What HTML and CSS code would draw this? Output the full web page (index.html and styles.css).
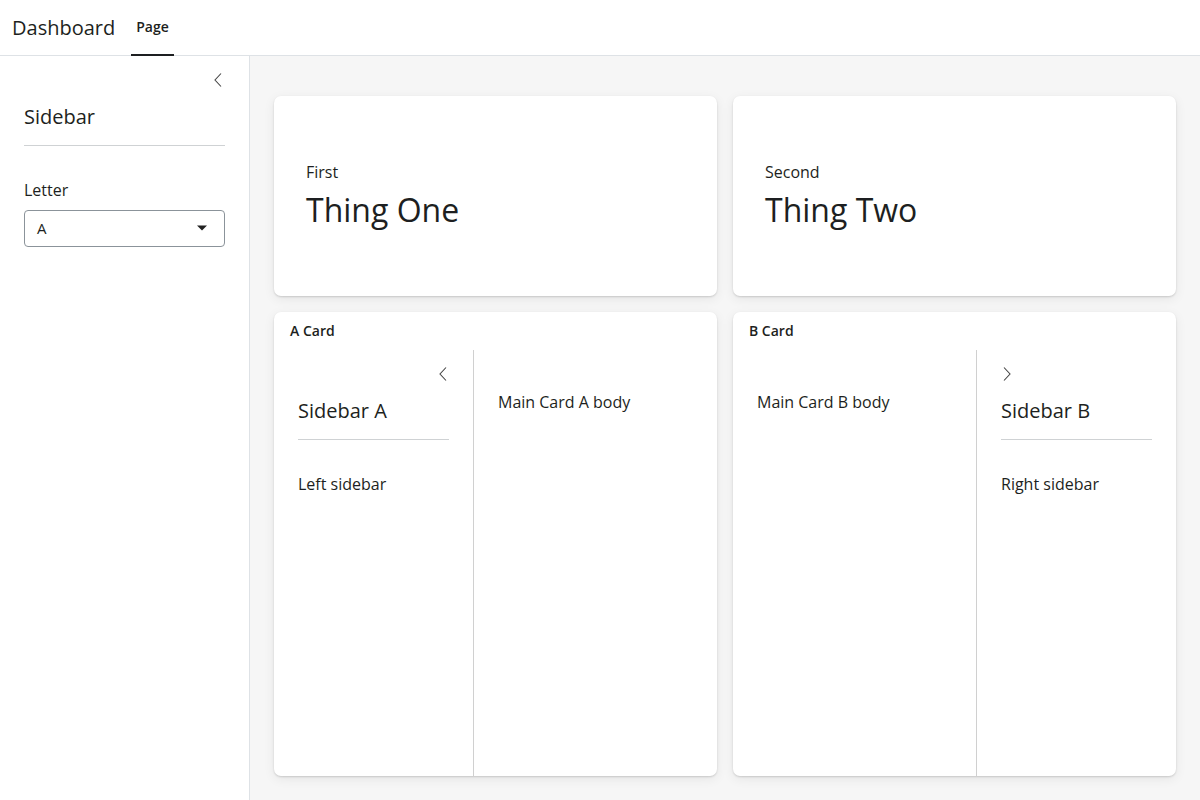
FILE: index.html
```html
<!DOCTYPE html>
<html>
<head>
<meta charset="utf-8">
<link rel="stylesheet" href="styles.css">
</head>
<body>
<header class="navbar">
  <div class="brand">Dashboard</div>
  <nav class="tabs"><a class="tab active">Page</a></nav>
</header>
<div class="layout">
  <aside class="sidebar">
    <div class="collapse-row">
      <svg class="chev" width="12" height="16" viewBox="0 0 12 16"><path d="M9 1.5 L3 8 L9 14.5" fill="none" stroke="#444" stroke-width="1.1"/></svg>
    </div>
    <h2 class="side-title">Sidebar</h2>
    <hr class="rule">
    <label class="field-label">Letter</label>
    <div class="select">
      <span>A</span>
      <svg width="12" height="8" viewBox="0 0 12 8"><path d="M1 1.5 H11 L6 6.5 Z" fill="#222"/></svg>
    </div>
  </aside>
  <main class="main">
    <div class="grid">
      <section class="card value-box">
        <div class="vb-title">First</div>
        <div class="vb-value">Thing One</div>
      </section>
      <section class="card value-box">
        <div class="vb-title">Second</div>
        <div class="vb-value">Thing Two</div>
      </section>
      <section class="card layout-card">
        <div class="card-header">A Card</div>
        <div class="card-body">
          <div class="inner-sidebar left">
            <div class="collapse-row">
              <svg class="chev" width="12" height="16" viewBox="0 0 12 16"><path d="M9 1.5 L3 8 L9 14.5" fill="none" stroke="#444" stroke-width="1.1"/></svg>
            </div>
            <h3 class="inner-title">Sidebar A</h3>
            <hr class="rule">
            <p class="inner-text">Left sidebar</p>
          </div>
          <div class="inner-main">Main Card A body</div>
        </div>
      </section>
      <section class="card layout-card">
        <div class="card-header">B Card</div>
        <div class="card-body">
          <div class="inner-main">Main Card B body</div>
          <div class="inner-sidebar right">
            <div class="collapse-row start">
              <svg class="chev" width="12" height="16" viewBox="0 0 12 16"><path d="M3 1.5 L9 8 L3 14.5" fill="none" stroke="#444" stroke-width="1.1"/></svg>
            </div>
            <h3 class="inner-title">Sidebar B</h3>
            <hr class="rule">
            <p class="inner-text">Right sidebar</p>
          </div>
        </div>
      </section>
    </div>
  </main>
</div>
</body>
</html>
```

FILE: styles.css
```css
* { box-sizing: border-box; }
html, body { margin: 0; height: 100%; }
body {
  font-family: "Open Sans", "Noto Sans", sans-serif;
  color: #1d1f21;
  background: #fff;
  overflow: hidden;
}
.navbar {
  height: 56px;
  border-bottom: 1px solid #dee2e6;
  display: flex;
  align-items: stretch;
  padding-left: 12px;
  background: #fff;
}
.brand {
  font-size: 20px;
  display: flex;
  align-items: center;
  margin-right: 16px;
}
.tabs { display: flex; }
.tab {
  font-size: 14px;
  font-weight: 600;
  padding: 0 5px;
  display: flex;
  align-items: center;
  border-bottom: 2px solid #1d1f21;
  margin-bottom: -1px;
  padding-bottom: 1px;
}
.layout {
  display: flex;
  height: calc(100% - 56px);
}
.sidebar {
  width: 250px;
  flex: none;
  border-right: 1px solid #dee2e6;
  padding: 16px 24px 0 24px;
  background: #fff;
}
.collapse-row {
  display: flex;
  justify-content: flex-end;
  height: 22px;
}
.sidebar .collapse-row { padding-right: 1px; }
.collapse-row.start { justify-content: flex-start; }
.side-title {
  font-size: 20px;
  font-weight: 400;
  margin: 9px 0 0 0;
  line-height: 28px;
}
.rule {
  border: 0;
  border-top: 1px solid #cfd2d4;
  margin: 14px 0 0 0;
}
.field-label {
  display: block;
  font-size: 16px;
  margin-top: 33px;
  line-height: 22px;
}
.select {
  margin-top: 9px;
  height: 37px;
  border: 1px solid #8b939a;
  border-radius: 4px;
  display: flex;
  align-items: center;
  justify-content: space-between;
  padding: 0 16px 1px 12px;
  font-size: 15px;
}
.main {
  flex: 1;
  background: #f6f6f6;
  padding: 40px 24px 24px 24px;
}
.grid {
  display: grid;
  grid-template-columns: 1fr 1fr;
  grid-template-rows: 200px 464px;
  gap: 16px;
}
.card {
  background: #fff;
  border-radius: 7px;
  box-shadow: 0 1px 2px rgba(0,0,0,0.15), 0 3px 12px rgba(0,0,0,0.07);
  overflow: hidden;
}
.value-box {
  display: flex;
  flex-direction: column;
  justify-content: center;
  padding: 0 32px;
}
.vb-title {
  font-size: 16px;
  line-height: 24px;
  margin-top: -3px;
}
.vb-value {
  font-size: 32px;
  line-height: 40px;
  margin-top: 6px;
}
.layout-card {
  display: flex;
  flex-direction: column;
}
.card-header {
  height: 38px;
  font-size: 14px;
  font-weight: 600;
  padding: 0 16px 2px 16px;
  display: flex;
  align-items: center;
}
.card-body {
  flex: 1;
  display: flex;
}
.inner-sidebar {
  width: 200px;
  flex: none;
  padding: 16px 24px 0 24px;
}
.inner-sidebar.left { border-right: 1px solid #d0d0d0; }
.inner-sidebar.right { border-left: 1px solid #d0d0d0; }
.inner-title {
  font-size: 20px;
  font-weight: 400;
  margin: 9px 0 0 0;
  line-height: 28px;
}
.inner-text {
  font-size: 16px;
  margin: 33px 0 0 0;
  line-height: 22px;
}
.inner-main {
  flex: 1;
  padding: 41px 24px 0 24px;
  font-size: 16px;
  line-height: 22px;
}
```
